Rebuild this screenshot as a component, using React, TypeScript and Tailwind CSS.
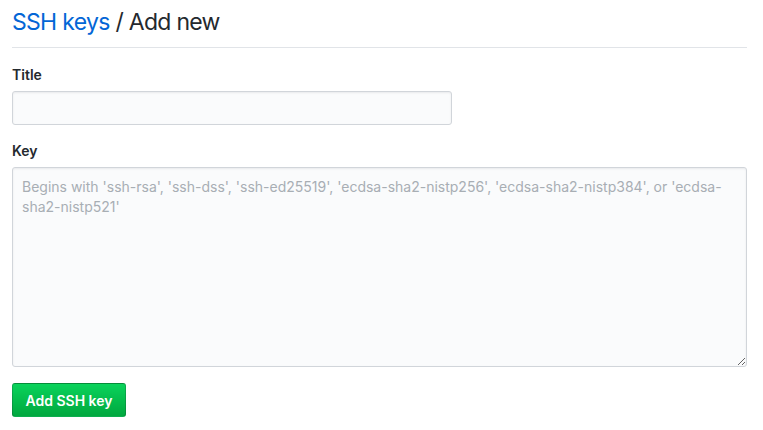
export default function App() {
  return (
    <div className="min-h-screen bg-white px-[12px] pr-[16px] text-[#24292e] font-['Inter','Liberation_Sans',sans-serif]">
      <div className="pt-[7px] pb-[10px] border-b border-[#e1e4e8]">
        <h2 className="text-[23px] leading-[30px] font-normal tracking-[-0.7px]">
          <a href="#" className="text-[#0366d6]">SSH keys</a> / Add new
        </h2>
      </div>

      <form onSubmit={(e) => e.preventDefault()}>
        <label className="block mt-[16px] mb-[6px] text-[14px] leading-[21px] font-semibold">Title</label>
        <input
          type="text"
          className="block w-[440px] h-[34px] px-[8px] text-[14px] bg-[#fafbfc] border border-[#d1d5da] rounded-[3px] shadow-[inset_0_1px_2px_rgba(27,31,35,0.075)] outline-none"
        />

        <label className="block mt-[15px] mb-[6px] text-[14px] leading-[21px] font-semibold">Key</label>
        <textarea
          className="block w-full h-[200px] px-[9px] py-[9px] text-[14px] leading-[20px] bg-[#fafbfc] border border-[#d1d5da] rounded-[3px] shadow-[inset_0_1px_2px_rgba(27,31,35,0.075)] outline-none placeholder:text-[#a8aeb4]"
          placeholder="Begins with 'ssh-rsa', 'ssh-dss', 'ssh-ed25519', 'ecdsa-sha2-nistp256', 'ecdsa-sha2-nistp384', or 'ecdsa-sha2-nistp521'"
        />

        <button
          type="submit"
          className="mt-[16px] h-[34px] w-[114px] text-[14px] font-semibold text-white rounded-[3px] border border-[rgba(27,31,35,0.2)] bg-gradient-to-b from-[#0ad35b] to-[#01a83f]"
        >
          Add SSH key
        </button>
      </form>
    </div>
  );
}
